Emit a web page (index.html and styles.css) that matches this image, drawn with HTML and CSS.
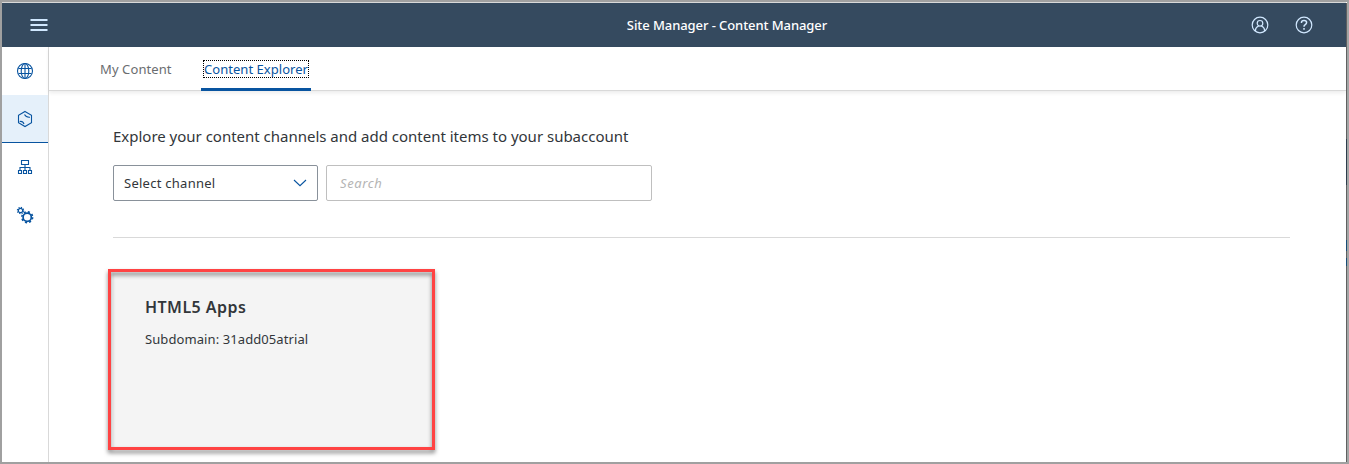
FILE: index.html
```html
<!DOCTYPE html>
<html lang="en">
<head>
<meta charset="utf-8">
<title>Site Manager - Content Manager</title>
<link rel="stylesheet" href="styles.css">
</head>
<body>
<div class="window">
  <header class="shell">
    <button class="icon-button" aria-label="Menu"><svg width="18" height="14" viewBox="0 0 18 14" fill="#d1e8ff"><path d="M.5 1h17v2H.5zM.5 6h17v2H.5zM.5 11h17v2H.5z"/></svg></button>
    <h1 class="shell-title">Site Manager - Content Manager</h1>
    <div class="shell-actions">
      <svg width="18" height="18" viewBox="0 0 18 18" fill="none" stroke="#d1e8ff" stroke-width="1.2"><circle cx="9" cy="9" r="7.8"/><circle cx="9" cy="7.3" r="2.8"/><path d="M4.5 15v-1c0-2 1.5-3.3 3.2-4M13.500 15v-1c0-2-1.500-3.300-3.200-4"/></svg>
      <svg width="18" height="18" viewBox="0 0 18 18" fill="none" stroke="#d1e8ff" stroke-width="1.2"><circle cx="9" cy="9" r="7.800"/><path stroke-width="1.5" d="M6.500 7V6.300C6.500 5 7.500 4.500 9 4.500s2.600.700 2.600 2S10.700 8.200 9.900 8.800C9.200 9.300 9 9.700 9 10.700M9 12v1.700"/></svg>
    </div>
  </header>
  <div class="body">
    <nav class="side">
      <a class="side-item"><svg width="18" height="18" viewBox="0 0 18 18" fill="none" stroke="#0854a0" stroke-width="1.1"><circle cx="9" cy="9" r="7.500"/><ellipse cx="9" cy="9" rx="3.800" ry="7.500"/><path d="M9 1.500v15M2.500 6.500h13M2.500 11.500h13"/></svg></a>
      <a class="side-item selected"><svg width="18" height="18" viewBox="0 0 18 18" fill="none" stroke="#0854a0" stroke-width="1.1"><path d="M9 1.500l6.500 3.700v7.600L9 16.500l-6.500-3.700V5.200zM3.700 11.500c2.300-.4 3.600.5 4.300 2.500M8.500 4.500c1 1.900 3 3 5.500 2.700"/></svg></a>
      <a class="side-item"><svg width="18" height="18" viewBox="0 0 18 18" fill="none" stroke="#0854a0" stroke-width="1.100"><path d="M5.500 2.500h7v4h-7zM9 6.500v6M4 12.500v-3h10v3M2.500 12.500h3v3h-3zM7.500 12.500h3v3h-3zM12.500 12.500h3v3h-3z"/></svg></a>
      <a class="side-item"><svg width="18" height="18" viewBox="0 0 18 18" fill="none" stroke="#0854a0"><circle cx="4.500" cy="4.500" r="2.200" stroke-width="1.200"/><circle cx="4.500" cy="4.500" r="3.100" stroke-width="1.200" stroke-dasharray="1.200 1.235"/><circle cx="11.200" cy="11.200" r="4.100" stroke-width="1.700"/><circle cx="11.200" cy="11.200" r="5.400" stroke-width="1.600" stroke-dasharray="2.100 2.141"/></svg></a>
    </nav>
    <main class="main">
      <div class="tabs">
        <a class="tab">My Content</a>
        <a class="tab active"><span class="focus">Content Explorer</span></a>
      </div>
      <section class="content">
        <p class="intro">Explore your content channels and add content items to your subaccount</p>
        <div class="filters">
          <div class="select"><span>Select channel</span><svg width="14" height="8" viewBox="0 0 14 8" fill="none" stroke="#0854a0" stroke-width="1.100"><path d="M1 1l6 5.700L13 1"/></svg></div>
          <input class="search" placeholder="Search">
        </div>
        <article class="card">
          <h2>HTML5 Apps</h2>
          <p>Subdomain: 31add05atrial</p>
          <span class="highlight"></span>
        </article>
      </section>
    </main>
  </div>
  <span class="edge"></span>
</div>
</body>
</html>
```
FILE: styles.css
```css
* { box-sizing: border-box; }
body { margin: 0; font: 13px/18px "Noto Sans", sans-serif; color: #32363a; }
h1, h2, p { margin: 0; }
svg { display: block; }
.window { position: relative; display: flex; flex-direction: column; width: 1349px; height: 464px; border: 2px solid #a0a0a0; border-right-color: #a3a6a6; overflow: hidden; background: #fff; }
.shell { display: flex; align-items: center; justify-content: space-between; height: 45px; flex: none; background: #354a5f; border-top: 1px solid #d9d9d9; margin-right: 1px; }
.icon-button { display: flex; width: 18px; margin-left: 28px; padding: 0; border: 0; background: none; }
.shell-title { flex: 1; padding-left: 155px; text-align: center; font-size: 13px; font-weight: 500; letter-spacing: -.08px; color: #fff; }
.shell-actions { display: flex; gap: 26px; margin-right: 33px; }
.body { display: flex; flex: 1; }
.side { width: 47px; border-right: 1px solid #d9d9d9; }
.side-item { display: flex; align-items: center; justify-content: center; height: 48px; }
.side-item.selected { background: #e5f0fa; border-bottom: 1px solid #0854a0; }
.main { flex: 1; margin-right: 1px; }
.tabs { display: flex; height: 44px; padding-left: 51px; border-bottom: 1px solid #d9d9d9; box-shadow: 0 2px 4px rgba(0,0,0,.08); }
.tab { width: 101px; height: 44px; padding-top: 13px; color: #6a6d70; letter-spacing: .1px; }
.tab.active { width: 110px; padding-left: 2px; color: #0854a0; border-bottom: 3px solid #0854a0; border-radius: 2px 2px 0 0; letter-spacing: .04px; }
.focus { display: block; width: 106px; height: 18px; border: 1px dotted #000; line-height: 16px; white-space: nowrap; }
.content { padding: 35px 56px 0 64px; }
.intro { font-size: 15px; line-height: 20px; letter-spacing: -.01px; }
.filters { display: flex; gap: 8px; height: 92px; padding-top: 19px; border-bottom: 1px solid #d9d9d9; }
.select { display: flex; align-items: center; justify-content: space-between; width: 205px; height: 36px; padding: 0 10px; border: 1px solid #89919a; border-radius: 2px; letter-spacing: .26px; }
.search { width: 326px; height: 36px; padding: 0 13px; border: 1px solid #bfbfbf; border-radius: 2px; font: inherit; letter-spacing: .6px; }
.search::placeholder { color: #b5b5b5; font-style: italic; opacity: 1; }
.card { position: relative; width: 320px; height: 176px; margin-top: 35px; padding: 23px 32px; background: #f4f4f4; }
.card h2 { margin-bottom: 12px; font-size: 16px; line-height: 22px; font-weight: 600; letter-spacing: .45px; }
.card p { letter-spacing: .09px; }
.highlight { position: absolute; left: -5px; top: -4px; width: 327px; height: 181px; border: 3px solid #ff4343; filter: drop-shadow(0 3px 2px rgba(0,0,0,.5)); }
.edge { position: absolute; top: 1px; right: 0; width: 1px; height: 459px; background: linear-gradient(#606060 0 136px, #2d3c4b 136px 182px, #606060 182px 237px, #174b76 237px 248px, #606060 248px 255px, #174b76 255px 263px, #606060 263px); }
```
